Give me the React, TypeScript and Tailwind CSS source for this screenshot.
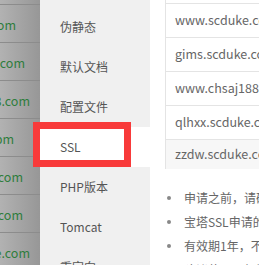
import React from 'react';

const stripRows = [
  { text: 'www.scduke.com', right: 24 },
  { text: 'gims.scduke.com', right: 15 },
  { text: 'www.chsaj188.com', right: 10 },
  { text: 'qlhxx.scduke.cpm', right: 26 },
  { text: 'zzdw.scduke.com', right: 17 },
  { text: 'wap.scduke.com', right: 17 },
  { text: 'm.scduke.com', right: 10 },
];

const menu = ['伪静态', '默认文档', '配置文件', 'SSL', 'PHP版本', 'Tomcat', '重定向'];

const domains = ['www.scduke.com', 'gims.scduke.com', 'www.chsaj188.com', 'qlhxx.scduke.com', 'zzdw.scduke.com'];

const tips = [
  '申请之前，请确保域名已解析，如未解析会导致审核失败',
  '宝塔SSL申请的是免费版TrustAsia DV SSL CA - G5证书',
  '有效期1年，不支持续签，到期后需要重新申请',
  '建议使用二级域名为www的域名申请证书',
];

const App: React.FC = () => {
  return (
    <div
      className="flex h-[265px] w-[259px] overflow-hidden bg-white text-[12px]"
      style={{ fontFamily: '"Noto Sans CJK SC", "Noto Sans", sans-serif' }}
    >
      {/* masked list behind the dialog */}
      <div className="w-[40px] shrink-0 bg-gradient-to-r from-[#b2b2b2] to-[#979797]">
        <div className="h-[5px] border-b border-[#8c8c8c]" />
        {stripRows.map((r, i) => (
          <div key={i} className="relative h-[38px] overflow-hidden border-b border-[#8c8c8c]">
            <span
              className="absolute top-[11px] whitespace-nowrap text-[12.5px] text-[#2f7d3c]"
              style={{ right: r.right }}
            >
              {r.text}
            </span>
          </div>
        ))}
      </div>

      {/* dialog side menu */}
      <div className="w-[110px] shrink-0 bg-[#f0f0f0] pt-[7px]">
        {menu.map(m => (
          <div
            key={m}
            className={`relative flex h-[40px] items-center pl-[20px] text-[#555] ${m === 'SSL' ? 'bg-white' : ''}`}
          >
            {m}
            {m === 'SSL' && (
              <div className="absolute left-[-7px] top-[-5px] h-[45px] w-[98px] border-[7px] border-[#f83a3a]" />
            )}
          </div>
        ))}
      </div>

      {/* content */}
      <div className="min-w-0 flex-1 bg-white">
        <div className="ml-[15px] border-l border-[#e4e4e4]">
          <div className="h-[4px] border-b border-[#e4e4e4]" />
          {domains.map((d, i) => (
            <div
              key={d}
              className={`flex items-center whitespace-nowrap pl-[9px] text-[12.5px] text-[#666] ${i < domains.length - 1 ? 'h-[34px] border-b border-[#e4e4e4]' : 'h-[29px] bg-[#f7f7f7]'}`}
            >
              {d}
            </div>
          ))}
        </div>
        <ul className="mt-[20px] flex flex-col gap-[6px] pl-[17px]">
          {tips.map(t => (
            <li key={t} className="flex h-[18px] items-center whitespace-nowrap text-[#666]">
              <span className="mr-[13px] h-[4px] w-[4px] shrink-0 rounded-full bg-[#888]" />
              {t}
            </li>
          ))}
        </ul>
      </div>
    </div>
  );
};

export default App;
